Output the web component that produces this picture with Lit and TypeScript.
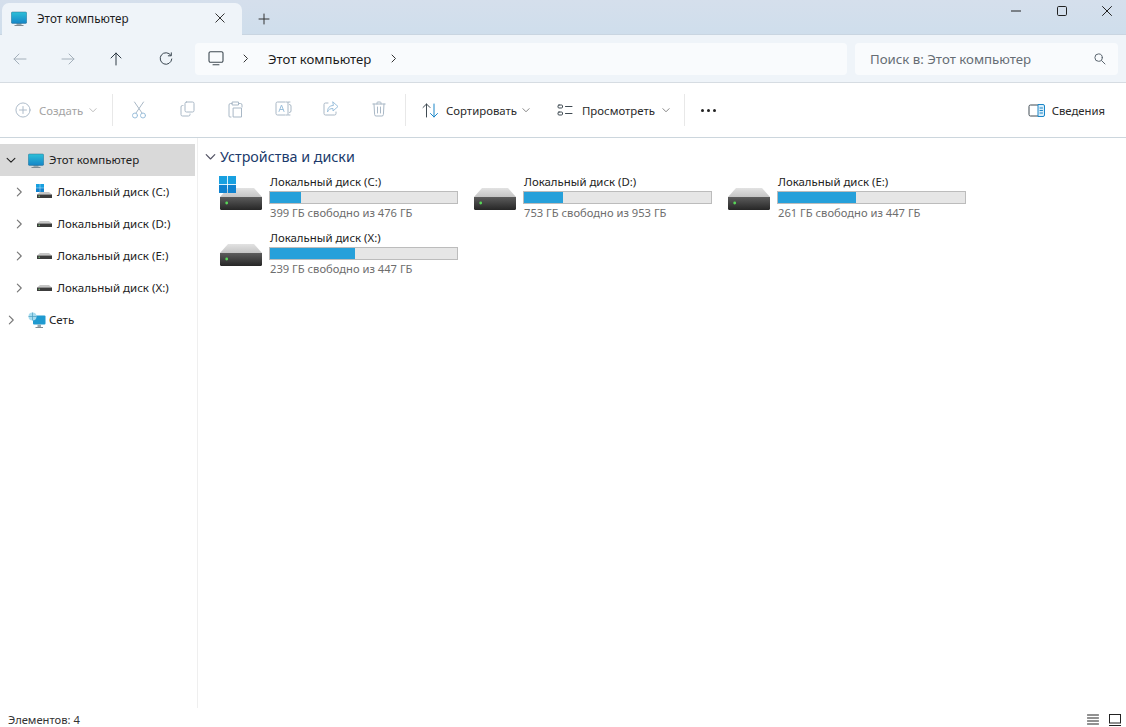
import { LitElement, html, css, svg } from "lit";
import { customElement } from "lit/decorators.js";

const ic = (w: number, h: number, body: unknown, vb = `0 0 ${w} ${h}`) =>
  html`<svg width=${w} height=${h} viewBox=${vb} fill="none" style="display:block;flex:none">${body}</svg>`;

const monitor = (w: number, h: number) => ic(w, h, svg`
  <defs><linearGradient id="scr" x1="0" y1="0" x2="0" y2="1"><stop offset="0" stop-color="#2cc0d8"/><stop offset="1" stop-color="#1585c8"/></linearGradient></defs>
  <rect x="5.5" y="12" width="5" height="2.4" fill="#9aa7ae"/>
  <rect x="3.5" y="14" width="9" height="1" fill="#7f8b92"/>
  <rect x="0.3" y="1" width="15.4" height="11.4" rx="1.2" fill="url(#scr)" stroke="#2c6f8e" stroke-width=".5"/>`, "0 0 16 15");

const win = (s: number) => ic(s, s, svg`
  <rect x="0" y="0" width="7.6" height="7.6" fill="#18a0e0"/><rect x="8.4" y="0" width="7.6" height="7.6" fill="#18a0e0"/>
  <rect x="0" y="8.4" width="7.6" height="7.6" fill="#0f82cf"/><rect x="8.4" y="8.4" width="7.6" height="7.6" fill="#0f82cf"/>`, "0 0 16 16");

const bigDrive = () => ic(42, 22, svg`
  <defs>
    <linearGradient id="dt" x1="0" y1="0" x2="0" y2="1"><stop offset="0" stop-color="#e2e2e2"/><stop offset="1" stop-color="#c4c4c4"/></linearGradient>
    <linearGradient id="db" x1="0" y1="0" x2="0" y2="1"><stop offset="0" stop-color="#5c5c5c"/><stop offset="1" stop-color="#262626"/></linearGradient>
  </defs>
  <path d="M8 0H34L42 9H0Z" fill="url(#dt)"/>
  <path d="M0 9H42V20.500Q42 22 40.500 22H1.500Q0 22 0 20.500Z" fill="url(#db)"/>
  <circle cx="6.700" cy="15" r="1.400" fill="#58d858"/>`);

const smallDrive = () => ic(15, 6, svg`
  <path d="M3 0H12L15 2.500H0Z" fill="#c6c6c6"/><path d="M0 2.500H15V6H0Z" fill="#3c3c3c"/><rect x="1.500" y="3.700" width="1.400" height="1" fill="#88d888"/>`);

const gr = (d: string, c = "#8b9aa8", w = 1) => svg`<path d=${d} stroke=${c} stroke-width=${w} stroke-linecap="round" stroke-linejoin="round"/>`;

const arrowL = (c: string) => ic(14, 12, gr("M13 6H1M6 1 1 6l5 5", c));
const arrowR = (c: string) => ic(14, 12, gr("M1 6h12M8 1l5 5-5 5", c));
const arrowU = ic(12, 14, gr("M6 13V1M1 6l5-5 5 5", "#2e3a44"));
const refresh = ic(14, 14, gr("M11.800 3.200A5.800 5.800 0 1 0 12.800 7M12.300 .8v3h-3", "#3a4650"));
const chevR = (c = "#333", sz = 9) => ic(sz, sz, gr("M3 1l3.500 3.500L3 8", c), "0 0 9 9");
const chevD = (c = "#333", sz = 9) => ic(sz, sz, gr("M1 3l3.500 3.500L8 3", c), "0 0 9 9");
const plainMon = ic(16, 15, gr("M2.500 .8h11a1.500 1.500 0 0 1 1.500 1.500v7.500a1.500 1.500 0 0 1-1.500 1.500h-11A1.500 1.500 0 0 1 1 9.800V2.300A1.500 1.500 0 0 1 2.500 .8ZM5 13.800h6", "#3f4a52", 1.1));
const search = ic(12, 12, gr("M7.500 7.500 11 11M8.300 4.600a3.700 3.700 0 1 1-7.400 0 3.700 3.700 0 0 1 7.400 0Z", "#5b6670"));
const lite = "#a9b8c6", blue = "#9cc0dc";

const plus = ic(16, 16, gr("M16 8.500a7.500 7.500 0 1 1-15 0 7.500 7.500 0 0 1 15 0ZM8.500 4.800v7.400M4.800 8.500h7.400", lite), "0 0 17 17");
const cut = ic(16, 18, svg`${gr("M3.500 1l7.500 11M12.500 1 5 12", lite)}${gr("M6.500 14.500a2.500 2.500 0 1 1-5 0 2.500 2.500 0 0 1 5 0ZM14.500 14.500a2.500 2.500 0 1 1-5 0 2.500 2.500 0 0 1 5 0Z", blue)}`);
const copy = ic(15, 16, gr("M6.500 1h6A1.500 1.500 0 0 1 14 2.500v7a1.500 1.500 0 0 1-1.500 1.500h-6A1.500 1.500 0 0 1 5 9.500v-7A1.500 1.500 0 0 1 6.500 1ZM3 4.500H2.500A1.500 1.500 0 0 0 1 6v7.500A1.500 1.500 0 0 0 2.500 15h6a1.500 1.500 0 0 0 1.500-1.500V13", lite));
const paste = ic(15, 17, gr("M4 2.500H2.500A1.500 1.500 0 0 0 1 4v11a1 1 0 0 0 1 1h1M11 2.500h1.500A1.500 1.500 0 0 1 14 4v2M4.500 1h6v3h-6ZM5.500 7h8v9h-8Z", lite));
const rename = ic(17, 15, svg`${gr("M10 1H2.500A1.500 1.500 0 0 0 1 2.500v10A1.500 1.500 0 0 0 2.500 14H10M13 1.500V13.500M11 1h1.500a.5.5 0 0 1 .5.500M15 1h-1.500M11 14h1.500M15 14h-1.500M14.500 3.500a1.500 1.500 0 0 1 1.500 1.500v5a1.500 1.500 0 0 1-1.500 1.500", lite)}${gr("M4 10.500 6.500 4 9 10.500M5 8.500h3", blue)}`);
const share = ic(16, 15, svg`${gr("M5 2H2.500A1.500 1.500 0 0 0 1 3.500v9A1.500 1.500 0 0 0 2.500 14h9a1.500 1.500 0 0 0 1.500-1.500V11", lite)}${gr("M10 1l5 4.500L10 10V7.500C7 7.500 5.500 8.500 4.500 11c0-4 2-6.500 5.500-6.500Z", blue)}`);
const trash = ic(14, 16, gr("M.8 3h12.400M5 3V1.800a.8.8 0 0 1 .8-.8h2.400a.8.8 0 0 1 .8.800V3M2 3l.6 10.500A1.500 1.500 0 0 0 4.100 15h5.800a1.500 1.500 0 0 0 1.500-1.500L12 3M5.500 6v6M8.500 6v6", lite));
const sort = ic(17, 15, svg`${gr("M4.500 14V1M1 4.500 4.500 1 8 4.500", "#3f4a52")}${gr("M12 1v13M8.500 10.500 12 14l3.500-3.500", "#1a86c8")}`);
const view = ic(16, 12, svg`${gr("M2 1h2.500a1 1 0 0 1 1 1v1a1 1 0 0 1-1 1H2a1 1 0 0 1-1-1V2a1 1 0 0 1 1-1ZM2 8h2.500a1 1 0 0 1 1 1v1a1 1 0 0 1-1 1H2a1 1 0 0 1-1-1V9a1 1 0 0 1 1-1Z", "#3f4a52")}${gr("M8.500 2.500H15M8.500 9.500H15", "#3f4a52")}`);
const details = ic(17, 13, svg`${gr("M10.500 1H2.500A1.500 1.500 0 0 0 1 2.500v8A1.500 1.500 0 0 0 2.500 12H10.500", "#3f4a52")}<path d="M10 .5h5A1.500 1.500 0 0 1 16.500 2v9a1.500 1.500 0 0 1-1.500 1.500h-5Z" fill="#d8edf9" stroke="#1a86c8"/>${gr("M12 4h2.500M12 6.500h2.500M12 9h2.500", "#1a86c8")}`);
const net = ic(18, 17, svg`
  <rect x="5" y="3.500" width="12.500" height="9" rx="1" fill="#1f9ad0"/>
  <rect x="9.500" y="12.500" width="3.500" height="2.500" fill="#9aa7ae"/><rect x="7.500" y="15" width="7.500" height="1" fill="#7f8b92"/>
  <circle cx="4.500" cy="4.500" r="4" fill="#a6dcef"/><path d="M.5 4.500h8M4.500.5v8" stroke="#4a9cc0" stroke-width=".7"/>`);

const drives = [
  { n: "Локальный диск (C:)", t: "399 ГБ свободно из 476 ГБ", p: 16.500, w: true },
  { n: "Локальный диск (D:)", t: "753 ГБ свободно из 953 ГБ", p: 21, w: false },
  { n: "Локальный диск (E:)", t: "261 ГБ свободно из 447 ГБ", p: 41.700, w: false },
  { n: "Локальный диск (X:)", t: "239 ГБ свободно из 447 ГБ", p: 45.500, w: false },
];

@customElement("app-root")
export class AppRoot extends LitElement {
  static styles = css`
    :host { display: flex; flex-direction: column; width: 1126px; height: 727px; overflow: hidden; background: #fff;
      font-family: "Noto Sans", "Open Sans", sans-serif; font-size: 11.500px; color: #1c1c1c; }
    .titlebar { height: 35px; flex: none; display: flex; align-items: flex-end; padding-left: 2px; box-sizing: border-box;
      background: linear-gradient(#d5dfec, #cfdeec); border-bottom: 1px solid #c9d5e1; }
    .tab { width: 240px; height: 32px; margin-bottom: -1px; box-sizing: border-box; padding: 0 17px 2px 9px; background: #eff4f9; border-radius: 7px 7px 0 0;
      display: flex; align-items: center; gap: 10px; font-size: 11.700px; }
    .tab span { flex: 1; }
    .newtab { margin: 0 0 9px 16px; }
    .winctl { margin-left: auto; align-self: flex-start; display: flex; align-items: center; gap: 35.500px; padding: 4px 14px 0 0; height: 13px; }
    .addr { height: 48px; flex: none; box-sizing: border-box; background: #eff4f9; border-bottom: 1px solid #d6dce2; display: flex; align-items: center; padding-left: 13px; }
    .nav { width: 48px; display: flex; flex: none; box-sizing: border-box; }
    .nav.up { padding-left: 1px; width: 48.500px; }
    .nav.re { padding-left: 1px; width: 37.500px; }
    .crumb { width: 652px; height: 32px; background: #f9fbfd; border-radius: 4px; display: flex; align-items: center; padding-left: 13px; box-sizing: border-box; font-size: 13.200px; flex: none; }
    .crumb .c1 { margin: 0 0 0 17px; }
    .crumb .t { margin: 0 18px 0 18px; }
    .searchbox { margin-left: 8px; width: 263px; height: 32px; background: #f9fbfd; border-radius: 4px; display: flex; align-items: center; justify-content: space-between; padding: 0 12px 0 15px; box-sizing: border-box; font-size: 13.250px; color: #666d74; flex: none; }
    .toolbar { height: 55px; flex: none; box-sizing: border-box; border-bottom: 1px solid #ccd6dd; display: flex; align-items: center; font-size: 11.400px; color: #2a2a2a; }
    .create { display: flex; align-items: center; gap: 8px; padding-left: 15px; width: 112px; box-sizing: border-box; color: #a3a3a3; flex: none; }
    .create svg:last-child { margin-left: -2px; }
    .sep { width: 1px; height: 32px; background: #e8e8e8; flex: none; }
    .tool { width: 48px; display: flex; justify-content: center; flex: none; }
    .tools { display: flex; padding: 0 2px 0 2px; flex: none; }
    .lbl { display: flex; align-items: center; flex: none; }
    .sorts { padding-left: 16px; width: 137px; box-sizing: border-box; gap: 7px; }
    .views { padding-left: 14px; width: 141px; box-sizing: border-box; gap: 9px; }
    .sorts svg:last-child, .views svg:last-child { margin-left: -2px; }
    .more { margin-left: 16px; display: flex; gap: 3px; }
    .more i { width: 3px; height: 3px; border-radius: 50%; background: #222; }
    .det { margin-left: auto; padding-right: 21px; gap: 7px; font-size: 11.300px; }
    .main { flex: 1; display: flex; min-height: 0; }
    .side { width: 198px; flex: none; box-sizing: border-box; border-right: 1px solid #efefef; padding-top: 6px; }
    .row { height: 32px; width: 195px; display: flex; align-items: center; box-sizing: border-box; font-size: 11.500px; color: #222; }
    .row.sel { background: #d9d9d9; }
    .row .ch { flex: none; }
    .row .t { margin-top: -2px; }
    .l0 { padding-left: 6px; }
    .l1 { padding-left: 14px; }
    .l1 .ic { width: 16px; margin-left: 12px; margin-right: 5px; display: flex; justify-content: center; }
    .l0 .ic { margin-left: 12px; margin-right: 5px; }
    .l0 .ic.n { margin-right: 3px; }
    .cdrive { position: relative; height: 14px; width: 16px; display: flex; align-items: flex-end; justify-content: center; margin-top: -2px; }
    .cwin { position: absolute; left: 0; top: 0; }
    .content { flex: 1; padding: 8px 0 0 7px; min-width: 0; }
    .grouphd { display: flex; align-items: center; gap: 4px; font-size: 14.300px; color: #1b3a6b; height: 20px; }
    .grid { display: grid; grid-template-columns: repeat(3, 254px); grid-auto-rows: 56px; margin: 8px 0 0 13px; }
    .drive { display: flex; align-items: flex-start; }
    .dicon { width: 51px; height: 40px; position: relative; flex: none; padding: 14px 0 0 2px; box-sizing: border-box; }
    .dicon .w { position: absolute; left: 1px; top: 2px; }
    .dinfo { width: 189px; }
    .dname { font-size: 11.400px; height: 17px; line-height: 15px; color: #222; padding-left: 1px; }
    .bar { height: 13px; box-sizing: border-box; background: #e6e6e6; border: 1px solid #bcbcbc; }
    .fill { height: 100%; background: #26a0da; }
    .dfree { font-size: 11.200px; height: 17px; line-height: 18px; color: #6d6d6d; padding-left: 1px; }
    .status { height: 19px; flex: none; display: flex; align-items: center; justify-content: space-between; padding: 4px 5px 0 8px; font-size: 11.200px; color: #333; box-sizing: border-box; }
    .viewbtns { display: flex; gap: 10px; }
  `;

  render() {
    return html`
      <div class="titlebar">
        <div class="tab">
          ${monitor(16, 15)}<span>Этот компьютер</span>
          ${ic(10, 10, gr("M.8 .8l8.400 8.400M9.200 .8 .8 9.200", "#333"))}
        </div>
        <div class="newtab">${ic(12, 12, gr("M6 1v10M1 6h10", "#333"))}</div>
        <div class="winctl">
          ${ic(10, 2, gr("M0 1h10", "#222"))}
          ${ic(10, 10, svg`<rect x=".5" y=".5" width="9" height="9" rx="1.200" stroke="#222"/>`)}
          ${ic(10, 10, gr("M.5 .5l9 9M9.500 .5l-9 9", "#222"))}
        </div>
      </div>
      <div class="addr">
        <div class="nav">${arrowL("#a4b0bb")}</div>
        <div class="nav">${arrowR("#a4b0bb")}</div>
        <div class="nav up">${arrowU}</div>
        <div class="nav re">${refresh}</div>
        <div class="crumb">
          ${plainMon}<span class="c1">${chevR("#333")}</span><span class="t">Этот компьютер</span>${chevR("#333")}
        </div>
        <div class="searchbox"><span>Поиск в: Этот компьютер</span>${search}</div>
      </div>
      <div class="toolbar">
        <div class="create">${plus}<span>Создать</span>${chevD("#b5b5b5", 8)}</div>
        <div class="sep"></div>
        <div class="tools">
          ${[cut, copy, paste, rename, share, trash].map((i) => html`<div class="tool">${i}</div>`)}
        </div>
        <div class="sep"></div>
        <div class="lbl sorts">${sort}<span>Сортировать</span>${chevD("#777", 8)}</div>
        <div class="lbl views">${view}<span>Просмотреть</span>${chevD("#777", 8)}</div>
        <div class="sep"></div>
        <div class="more"><i></i><i></i><i></i></div>
        <div class="lbl det">${details}<span>Сведения</span></div>
      </div>
      <div class="main">
        <div class="side">
          <div class="row sel l0"><span class="ch">${chevD("#222", 10)}</span><span class="ic">${monitor(16, 15)}</span><span class="t">Этот компьютер</span></div>
          ${drives.map((d) => html`
            <div class="row l1"><span class="ch">${chevR("#777", 10)}</span>
              <span class="ic">${d.w
                ? html`<div class="cdrive">${smallDrive()}<div class="cwin">${win(8)}</div></div>`
                : smallDrive()}</span><span class="t">${d.n}</span></div>`)}
          <div class="row l0"><span class="ch">${chevR("#777", 10)}</span><span class="ic n">${net}</span><span class="t">Сеть</span></div>
        </div>
        <div class="content">
          <div class="grouphd">${chevD("#556", 11)}<span>Устройства и диски</span></div>
          <div class="grid">
            ${drives.map((d) => html`
              <div class="drive">
                <div class="dicon">${bigDrive()}${d.w ? html`<div class="w">${win(17)}</div>` : ""}</div>
                <div class="dinfo">
                  <div class="dname">${d.n}</div>
                  <div class="bar"><div class="fill" style="width:${d.p}%"></div></div>
                  <div class="dfree">${d.t}</div>
                </div>
              </div>`)}
          </div>
        </div>
      </div>
      <div class="status">
        <span>Элементов: 4</span>
        <div class="viewbtns">
          ${ic(12, 12, gr("M.5 1h11M.5 4h11M.5 7h11M.5 10h11", "#222"))}
          ${ic(12, 12, svg`<rect x=".5" y=".5" width="11" height="8.500" stroke="#222"/><path d="M0 11.500h12" stroke="#222"/>`)}
        </div>
      </div>
    `;
  }
}
